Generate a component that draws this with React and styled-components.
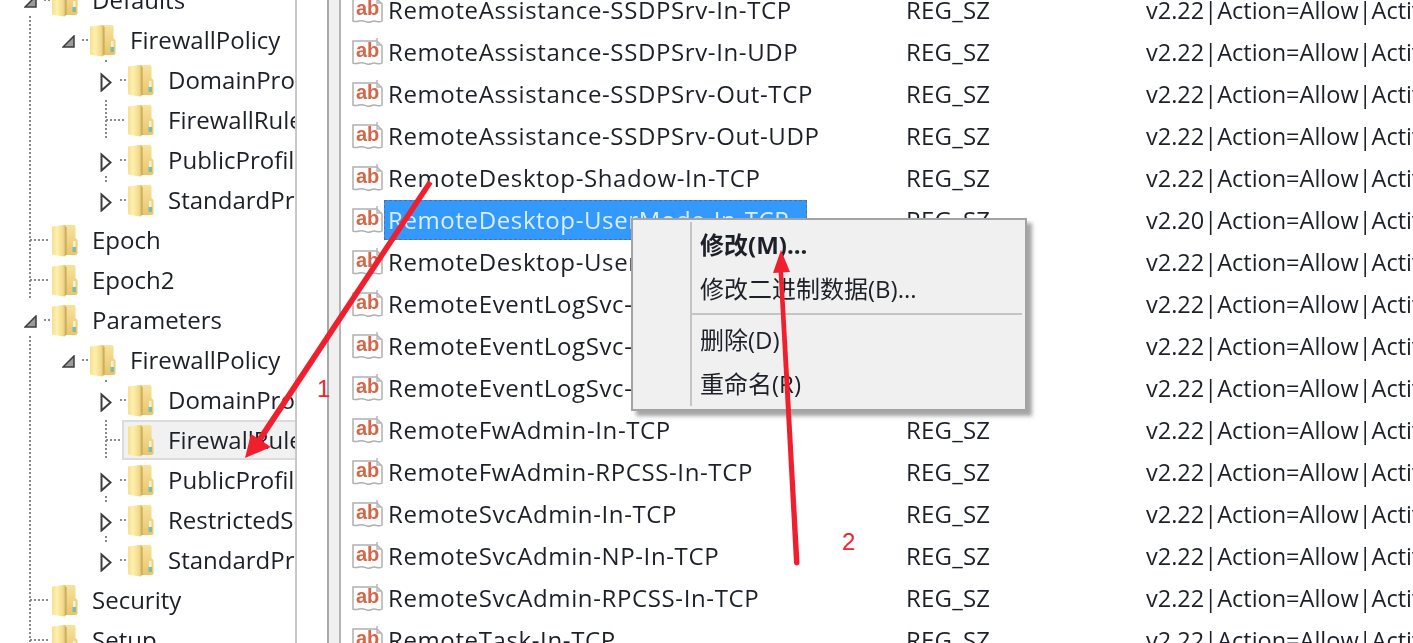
import React from 'react';
import styled, { createGlobalStyle } from 'styled-components';

const GlobalStyle = createGlobalStyle`
  html, body {
    margin: 0;
    padding: 0;
    background: #fff;
  }
`;

const FONT = `"Open Sans", "Noto Sans", "Noto Sans CJK SC", sans-serif`;
const DOT = '#8a8a8a';

const vDots = (top, h) =>
  `repeating-linear-gradient(to bottom, ${DOT} 0 2px, transparent 2px 4px) 29px ${top}px / 2px ${h}px no-repeat`;
const hDots = (left, w) =>
  `repeating-linear-gradient(to right, ${DOT} 0 2px, transparent 2px 4px) ${left}px 19px / ${w}px 2px no-repeat`;

const Page = styled.div`
  position: relative;
  display: flex;
  width: 100vw;
  height: 100vh;
  overflow: hidden;
  background: #fff;
  font-family: ${FONT};
  color: #1c2028;
`;

const Content = styled.div`
  display: flex;
  flex: 1;
  min-width: 0;
  filter: blur(0.5px);
`;

const TreePane = styled.div`
  flex: none;
  width: 295px;
  margin-top: -20px;
  overflow: hidden;
  border-right: 2px solid #c9c9c9;
`;

const TreeRow = styled.div`
  display: flex;
  align-items: center;
  height: 40px;
  white-space: nowrap;
`;

const Guide = styled.div`
  flex: none;
  width: 38px;
  height: 40px;
  background: ${(p) => p.$lines || 'none'};
`;

const Gutter = styled.div`
  flex: none;
  display: flex;
  align-items: center;
  width: 52px;
  height: 40px;
  box-sizing: border-box;
  padding-left: 24px;
  background: ${(p) => p.$lines || 'none'};
`;

const Node = styled.div`
  display: flex;
  flex: 1;
  align-items: center;
  gap: 14px;
  height: 40px;
  margin-left: -6px;
  padding-left: 6px;
  box-sizing: border-box;
  ${(p) => p.$active && 'background: #f1f1f1; outline: 2px solid #dcdcdc; outline-offset: -2px;'}
`;

const NodeLabel = styled.span`
  font-size: 24px;
  line-height: 40px;
`;

const Splitter = styled.div`
  flex: none;
  width: 44px;
  display: flex;
  justify-content: flex-end;
`;

const SplitBar = styled.div`
  width: 10px;
  background: #f0f0f0;
  border-left: 2px solid #a8a8a8;
  border-right: 2px solid #b4b4b4;
`;

const ListPane = styled.div`
  flex: 1;
  min-width: 0;
  margin-top: -11px;
  padding-left: 10px;
  overflow: hidden;
`;

const ListRow = styled.div`
  display: flex;
  align-items: center;
  height: 42px;
  line-height: 40px;
  white-space: nowrap;
  font-size: 24px;
`;

const NameCell = styled.div`
  flex: none;
  display: flex;
  align-items: center;
  width: 555px;
`;

const Name = styled.span`
  display: block;
  padding: 0 4px;
  letter-spacing: 0.62px;
  ${(p) => p.$selected && `
    background: #3399ff;
    color: #d8efff;
    outline: 1px dashed #5a6f8f;
    outline-offset: -1px;
    width: 423px;
    box-sizing: border-box;
  `}
`;

const TypeCell = styled.div`
  flex: none;
  width: 240px;
  letter-spacing: 0.2px;
`;

const DataCell = styled.div`
  flex: none;
  font-size: 23.5px;
`;

const Menu = styled.div`
  position: absolute;
  left: 631px;
  top: 218px;
  width: 396px;
  height: 193px;
  box-sizing: border-box;
  display: flex;
  background: #f0f0f0;
  border: 2px solid #a3a3a3;
  box-shadow: 5px 5px 4px rgba(90, 90, 90, 0.55);
  font-size: 24px;
  filter: blur(0.4px);
`;

const MenuRail = styled.div`
  flex: none;
  width: 57px;
  margin: 2px 0 3px;
  border-right: 2px solid #c4c4c4;
`;

const MenuList = styled.div`
  flex: 1;
  padding: 3px 3px 0 0;
`;

const MenuItem = styled.div`
  height: 44px;
  line-height: 44px;
  padding-left: 8px;
  font-weight: ${(p) => (p.$bold ? 700 : 400)};
`;

const MenuSep = styled.div`
  height: 2px;
  margin: 2px 0 3px;
  background: #c4c4c4;
`;

const Annotations = styled.svg`
  position: absolute;
  left: 0;
  top: 0;
  pointer-events: none;
`;

const Badge = styled.span`
  position: absolute;
  left: ${(p) => p.$x}px;
  top: ${(p) => p.$y}px;
  color: #f0262f;
  font-family: "Liberation Sans", sans-serif;
  font-size: 24px;
  line-height: 26px;
`;

function FolderIcon() {
  return (
    <svg width="26" height="33" viewBox="0 0 26 33" style={{ flex: 'none' }}>
      <defs>
        <linearGradient id="fb" x1="0" x2="1" y1="0" y2="0">
          <stop offset="0" stopColor="#f6e08e" />
          <stop offset="0.35" stopColor="#fdf0ae" />
          <stop offset="0.8" stopColor="#f2d987" />
          <stop offset="1" stopColor="#cfb060" />
        </linearGradient>
        <linearGradient id="ff" x1="0" x2="0" y1="0" y2="1">
          <stop offset="0" stopColor="#f7e39b" />
          <stop offset="1" stopColor="#e6c66e" />
        </linearGradient>
      </defs>
      <path d="M12 1h10c1 0 1.500 1 1.500 2v11l2 2v13c0 1-1 2-2 2H12z" fill="url(#ff)" />
      <path d="M0 2.500 12 1c1.500 0 2 1 2 2v28l-1.500 1.500L2 31c-1.300 0-2-1-2-2z" fill="url(#fb)" />
      <path d="M14 3v28" stroke="#c7a95c" strokeWidth="1.200" />
      <rect x="20.500" y="23" width="3.500" height="5" fill="#7cbcae" />
      <rect x="21" y="17" width="2.500" height="6" fill="#f7efce" />
    </svg>
  );
}

function Expander({ open }) {
  if (open) {
    return (
      <svg width="13" height="13" viewBox="0 0 13 13" style={{ marginTop: '2px' }}>
        <path d="M12 1v11H1z" fill="#9a9a9a" stroke="#3c3c3c" strokeWidth="1.500" />
      </svg>
    );
  }
  return (
    <svg width="12" height="24" viewBox="0 0 12 24">
      <path d="M1.500 6.500v16l9-8z" fill="#fff" stroke="#3f3f3f" strokeWidth="2" />
    </svg>
  );
}

function StringIcon() {
  return (
    <svg width="33" height="32" viewBox="0 0 33 32" style={{ flex: 'none' }}>
      <path
        d="M2 5h24l5 5v17c-3 2-5 0-8 0s-4 2-7 1-5-2-8-1-4 1-6 0z"
        fill="#fff"
        stroke="#b0b0b0"
        strokeWidth="1.500"
      />
      <path d="M26 2v7h5" fill="none" stroke="#b8b8b8" strokeWidth="1.500" />
      <text x="5" y="21" fontFamily="'Liberation Sans', sans-serif" fontWeight="700" fontSize="20" fill="#d4674a">
        ab
      </text>
    </svg>
  );
}

const stem = vDots(0, 40);
const tee = `${vDots(0, 40)}, ${hDots(30, 20)}`;
const teeLong = `${vDots(0, 44)}, ${hDots(30, 20)}`;
const knob = hDots(44, 8);

// guides: the dotted lines of the ancestor columns, own: the row's own connector
const treeRows = [
  { label: 'Defaults', kind: 'open', guides: [], own: `${knob}, ${vDots(36, 4)}` },
  { label: 'FirewallPolicy', kind: 'open', guides: [stem], own: knob },
  { label: 'DomainProfile', kind: 'closed', guides: [stem, null], own: `${knob}, ${vDots(0, 4)}` },
  { label: 'FirewallRules', kind: 'leaf', guides: [stem, null], own: teeLong },
  { label: 'PublicProfile', kind: 'closed', guides: [stem, null], own: `${knob}, ${vDots(36, 4)}` },
  { label: 'StandardProfile', kind: 'closed', guides: [stem, null], own: `${knob}, ${vDots(0, 4)}` },
  { label: 'Epoch', kind: 'leaf', guides: [], own: tee },
  { label: 'Epoch2', kind: 'leaf', guides: [], own: tee },
  { label: 'Parameters', kind: 'open', guides: [], own: `${knob}, ${vDots(36, 4)}` },
  { label: 'FirewallPolicy', kind: 'open', guides: [stem], own: knob },
  { label: 'DomainProfile', kind: 'closed', guides: [stem, null], own: `${knob}, ${vDots(0, 4)}` },
  { label: 'FirewallRules', kind: 'leaf', active: true, guides: [stem, null], own: teeLong },
  { label: 'PublicProfile', kind: 'closed', guides: [stem, null], own: `${knob}, ${vDots(36, 4)}` },
  { label: 'RestrictedServices', kind: 'closed', guides: [stem, null], own: `${knob}, ${vDots(0, 4)}, ${vDots(36, 4)}` },
  { label: 'StandardProfile', kind: 'closed', guides: [stem, null], own: `${knob}, ${vDots(0, 4)}` },
  { label: 'Security', kind: 'leaf', guides: [], own: tee },
  { label: 'Setup', kind: 'leaf', guides: [], own: tee },
];

const listRows = [
  'RemoteAssistance-SSDPSrv-In-TCP',
  'RemoteAssistance-SSDPSrv-In-UDP',
  'RemoteAssistance-SSDPSrv-Out-TCP',
  'RemoteAssistance-SSDPSrv-Out-UDP',
  'RemoteDesktop-Shadow-In-TCP',
  'RemoteDesktop-UserMode-In-TCP',
  'RemoteDesktop-UserMode-In-UDP',
  'RemoteEventLogSvc-In-TCP',
  'RemoteEventLogSvc-NP-In-TCP',
  'RemoteEventLogSvc-RPCSS-In-TCP',
  'RemoteFwAdmin-In-TCP',
  'RemoteFwAdmin-RPCSS-In-TCP',
  'RemoteSvcAdmin-In-TCP',
  'RemoteSvcAdmin-NP-In-TCP',
  'RemoteSvcAdmin-RPCSS-In-TCP',
  'RemoteTask-In-TCP',
];

function TreeItem({ row }) {
  return (
    <TreeRow>
      {row.guides.map((lines, i) => (
        <Guide key={i} $lines={lines} />
      ))}
      <Gutter $lines={row.own}>
        {row.kind !== 'leaf' && <Expander open={row.kind === 'open'} />}
      </Gutter>
      <Node $active={row.active}>
        <FolderIcon />
        <NodeLabel>{row.label}</NodeLabel>
      </Node>
    </TreeRow>
  );
}

export default function App() {
  return (
    <Page>
      <GlobalStyle />
      <Content>
        <TreePane>
          {treeRows.map((row, i) => (
            <TreeItem key={i} row={row} />
          ))}
        </TreePane>
        <Splitter>
          <SplitBar />
        </Splitter>
        <ListPane>
          {listRows.map((name, i) => (
            <ListRow key={name}>
              <NameCell>
                <StringIcon />
                <Name $selected={i === 5}>{name}</Name>
              </NameCell>
              <TypeCell>REG_SZ</TypeCell>
              <DataCell>{i === 5 ? 'v2.20' : 'v2.22'}|Action=Allow|Active=TRUE</DataCell>
            </ListRow>
          ))}
        </ListPane>
      </Content>
      <Menu>
        <MenuRail />
        <MenuList>
          <MenuItem $bold>修改(M)...</MenuItem>
          <MenuItem>修改二进制数据(B)...</MenuItem>
          <MenuSep />
          <MenuItem>删除(D)</MenuItem>
          <MenuItem>重命名(R)</MenuItem>
        </MenuList>
      </Menu>
      <Annotations width="1413" height="643" viewBox="0 0 1413 643">
        <g fill="#f01f2e" stroke="none">
          <path d="M428 180.500l4.500 3L261 443l-5-3.300z" />
          <path d="M245 458l6-24 20 13z" />
          <path d="M778.500 270l4.500-.2 16.500 293c0 3.500-5 3.500-5.500.2z" />
          <path d="M781 250l-8 23 17-1z" />
        </g>
      </Annotations>
      <Badge $x={317} $y={376}>1</Badge>
      <Badge $x={842} $y={529}>2</Badge>
    </Page>
  );
}
